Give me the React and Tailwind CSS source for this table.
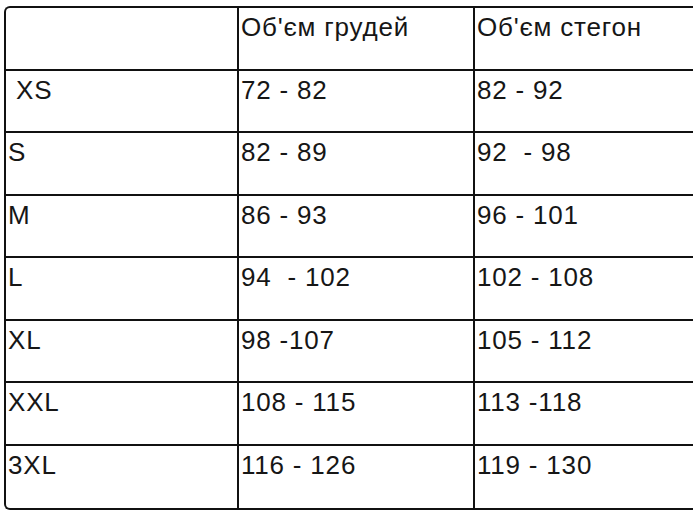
import React from "react";

// Size chart rows: size, chest, hips
const rows = [
  [" XS", "72 - 82", "82 - 92"],
  ["S", "82 - 89", "92  - 98"],
  ["M", "86 - 93", "96 - 101"],
  ["L", "94  - 102", "102 - 108"],
  ["XL", "98 -107", "105 - 112"],
  ["XXL", "108 - 115", "113 -118"],
  ["3XL", "116 - 126", "119 - 130"],
];

const Cell = ({ children, first }) => (
  <div
    className={
      "h-full pt-[5px] pl-[2px] whitespace-pre leading-[1.15] " +
      (first ? "" : "border-l-2 border-[#111]")
    }
  >
    {children}
  </div>
);

const App = () => {
  return (
    <div
      className="w-[700px] h-[511px] bg-white overflow-hidden pt-[6px] pl-[4px]"
      style={{ fontFamily: '"Liberation Sans", Arial, sans-serif' }}
    >
      <div className="w-[689px] border-t-2 border-l-2 border-b-2 border-[#111] rounded-tl-[6px] rounded-bl-[6px] text-[26px] tracking-[0.8px] text-[#161616]">
        <div className="grid grid-cols-[231px_236px_1fr] h-[62.5px] border-b-2 border-[#111]">
          <Cell first />
          <Cell>Об'єм грудей</Cell>
          <Cell>Об'єм стегон</Cell>
        </div>
        {rows.map((r, i) => (
          <div
            key={i}
            className={
              "grid grid-cols-[231px_236px_1fr] h-[62.5px] " +
              (i < rows.length - 1 ? "border-b-2 border-[#111]" : "")
            }
          >
            <Cell first>{r[0]}</Cell>
            <Cell>{r[1]}</Cell>
            <Cell>{r[2]}</Cell>
          </div>
        ))}
      </div>
    </div>
  );
};

export default App;
